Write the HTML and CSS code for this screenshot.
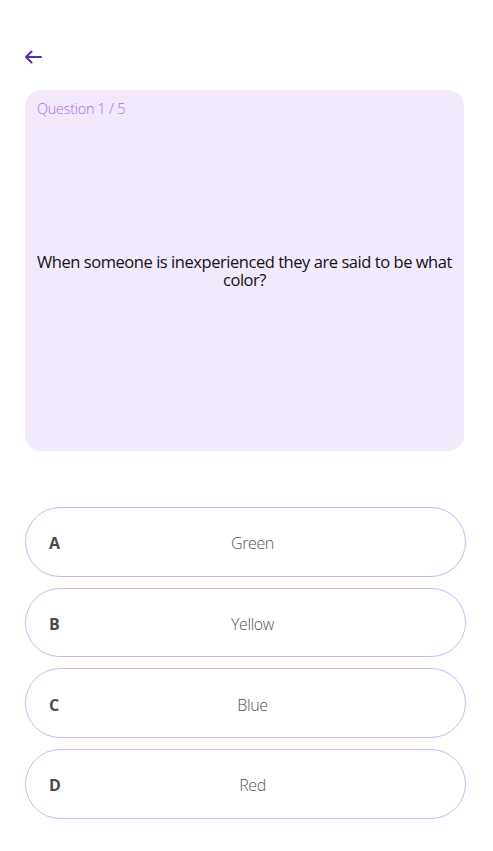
FILE: index.html
```html
<!DOCTYPE html>
<html lang="en">

<head>
    <meta charset="UTF-8">
    <meta name="viewport" content="width=device-width, initial-scale=1.0">
    <title>Quiz</title>
    <link rel="stylesheet" href="styles.css">
</head>

<body>
    <div class="quiz">
        <button class="back" aria-label="Back">
            <svg width="18" height="14" viewBox="0 0 18 14" fill="none" stroke="#5b2db3" stroke-width="2" stroke-linecap="round" stroke-linejoin="round">
                <path d="M17 7H2M7.5 1.5L2 7l5.5 5.5" />
            </svg>
        </button>

        <div class="question-card">
            <div class="counter">Question 1 / 5</div>
            <p class="question-text">When someone is inexperienced they are said to be what color?</p>
        </div>

        <ul class="options">
            <li class="option"><span class="letter">A</span><span class="answer">Green</span></li>
            <li class="option"><span class="letter">B</span><span class="answer">Yellow</span></li>
            <li class="option"><span class="letter">C</span><span class="answer">Blue</span></li>
            <li class="option"><span class="letter">D</span><span class="answer">Red</span></li>
        </ul>
    </div>
</body>

</html>
```

FILE: styles.css
```css
body {
    margin: 0;
    padding: 0;
    background-color: #fff;
    font-family: "Open Sans", "Noto Sans", Arial, sans-serif;
    color: #222;
}

.quiz {
    padding: 48px 27px 0 25px;
}

.back {
    display: block;
    background: none;
    border: none;
    padding: 0;
    margin: 0 0 0 -1px;
    height: 20px;
    cursor: pointer;
}

.question-card {
    position: relative;
    margin-top: 22px;
    width: 439px;
    height: 361px;
    box-sizing: border-box;
    background-color: #f3e9fd;
    border-radius: 16px;
    display: flex;
    align-items: center;
    justify-content: center;
    padding: 0 8px;
}

.counter {
    position: absolute;
    top: 9px;
    left: 12px;
    font-size: 14.5px;
    font-weight: 300;
    letter-spacing: -0.3px;
    color: #a56ee8;
}

.question-text {
    margin: 0;
    text-align: center;
    font-size: 16.5px;
    line-height: 18px;
    letter-spacing: -0.45px;
    color: #111;
}

.options {
    list-style: none;
    margin: 56px 0 0;
    padding: 0;
    display: flex;
    flex-direction: column;
    gap: 11px;
}

.option {
    height: 69.7px;
    box-sizing: border-box;
    border: 1px solid #d1b6f3;
    border-radius: 35px;
    display: flex;
    align-items: center;
    padding: 3px 23px 0;
}

.letter {
    width: 14px;
    font-size: 16px;
    font-weight: 700;
    color: #4a4a4a;
}

.answer {
    flex: 1;
    text-align: center;
    font-size: 16px;
    font-weight: 300;
    letter-spacing: -0.4px;
    color: #555;
}
```
